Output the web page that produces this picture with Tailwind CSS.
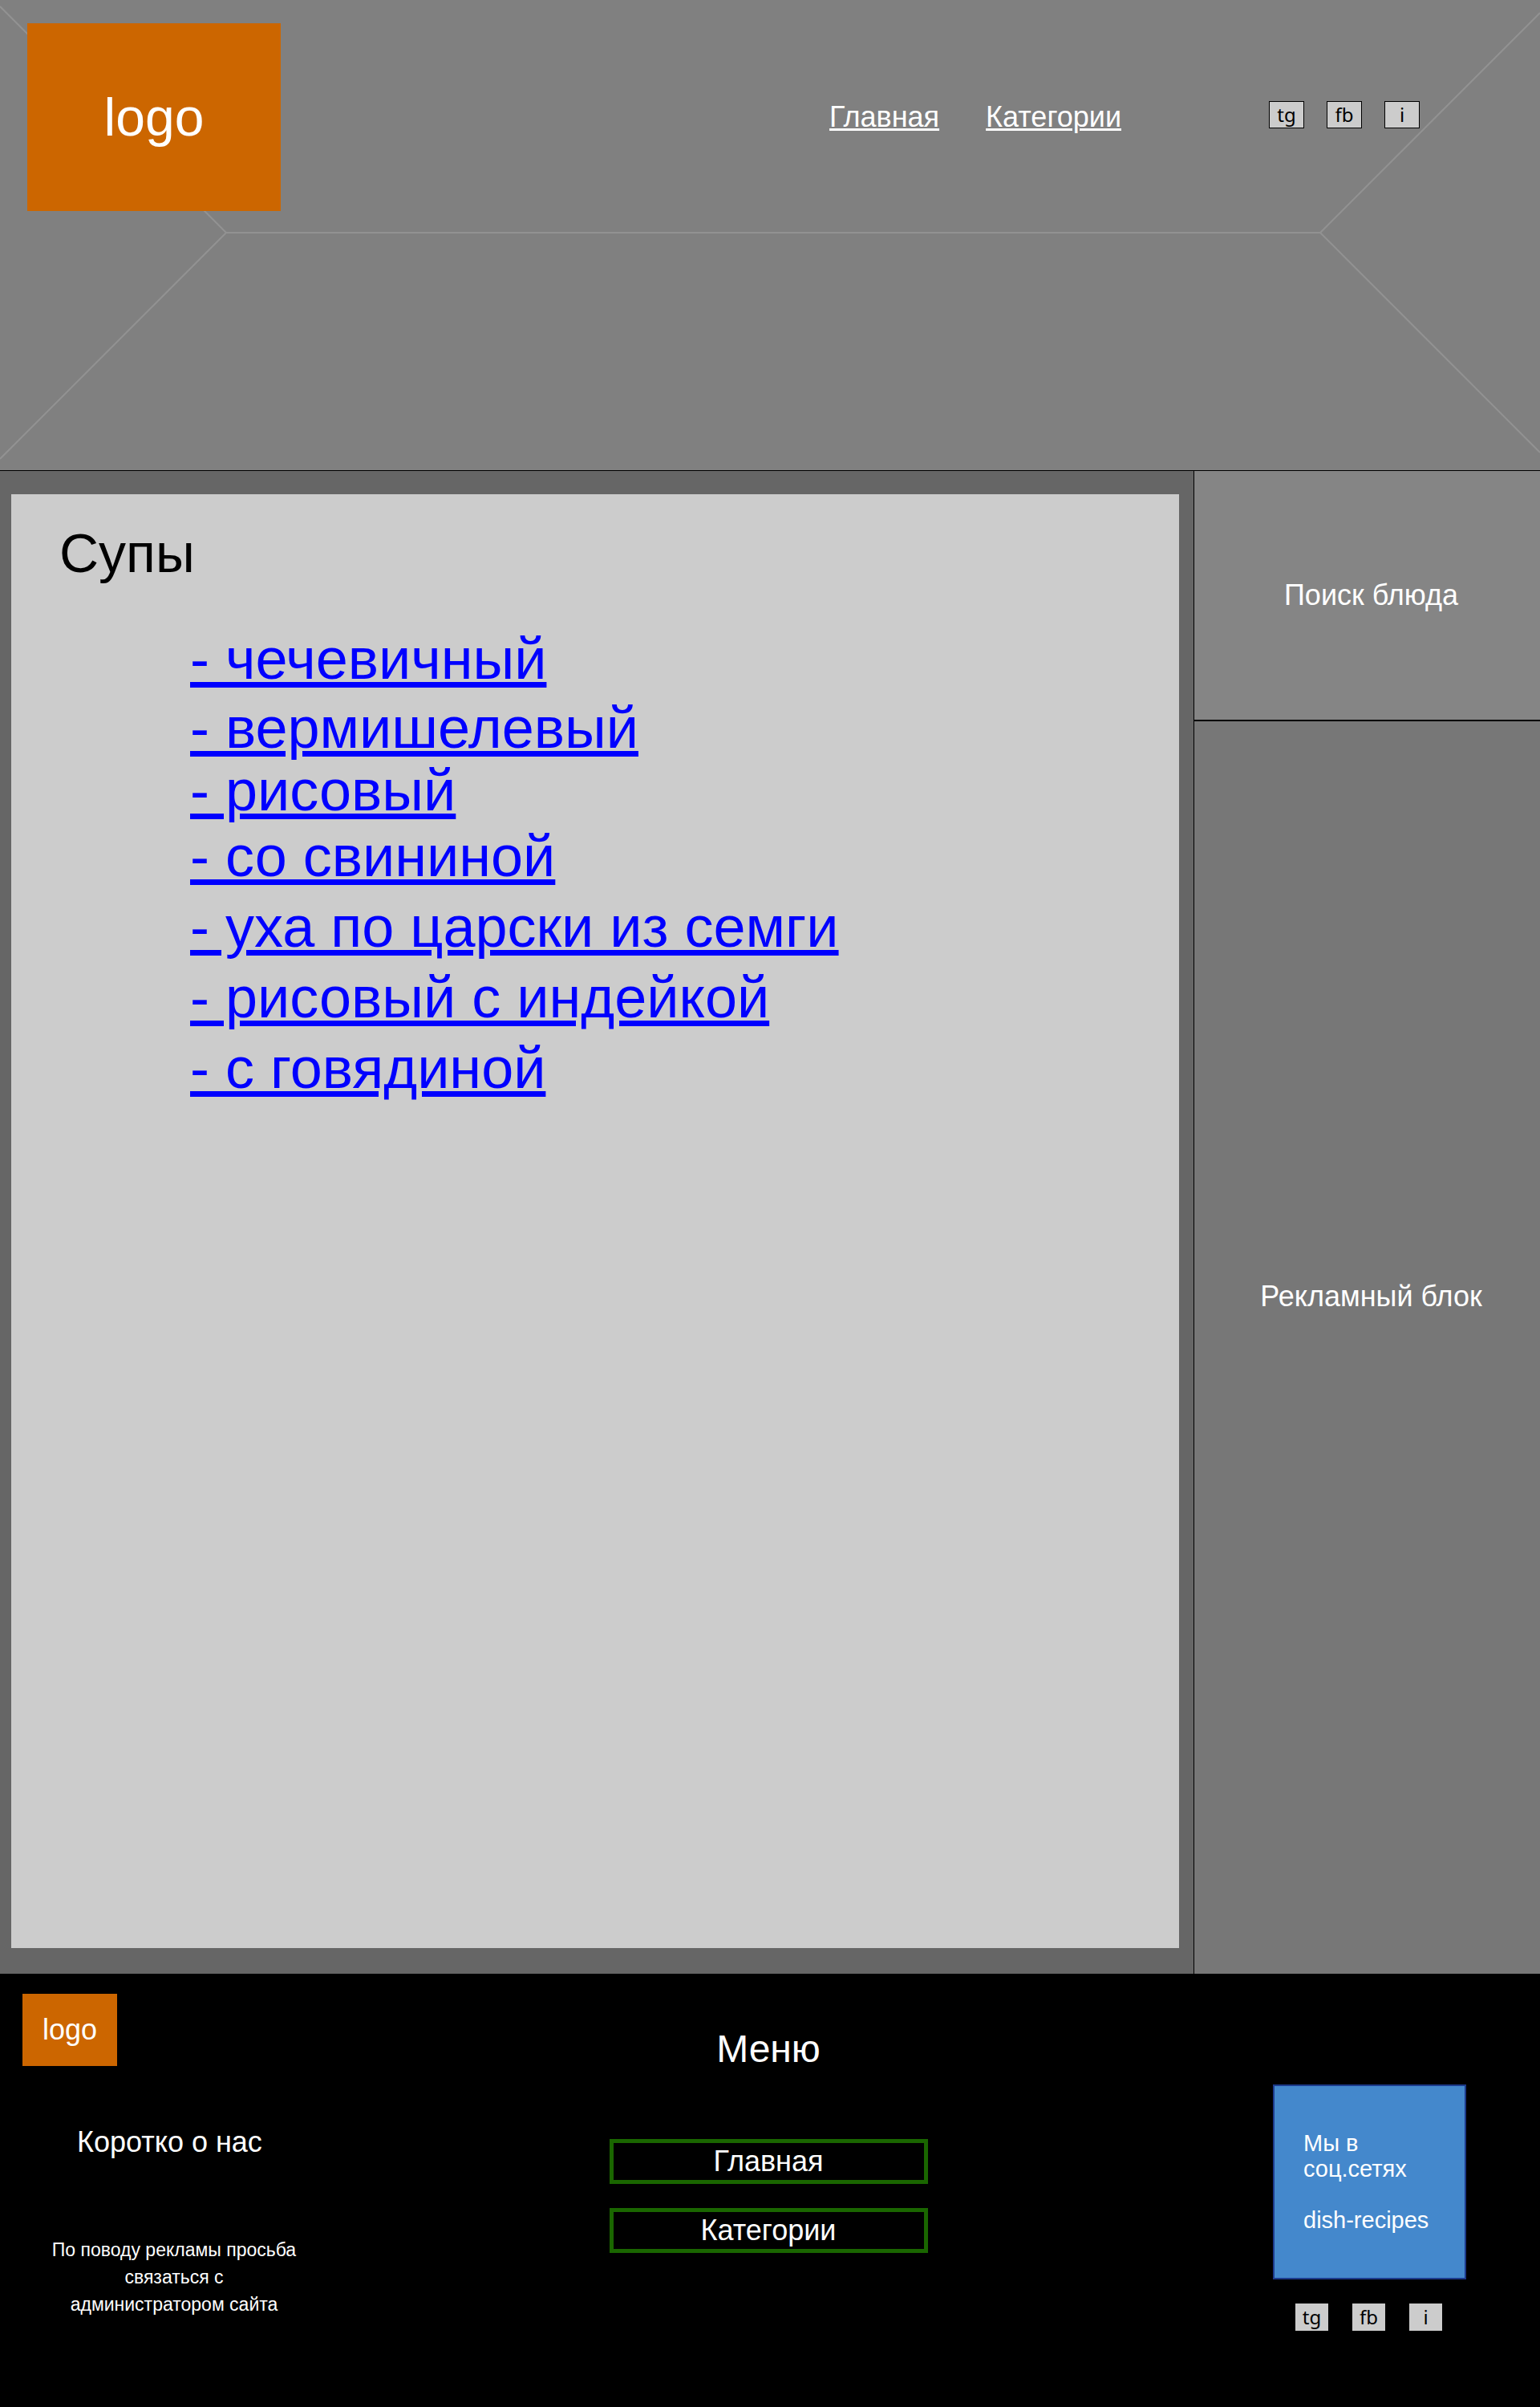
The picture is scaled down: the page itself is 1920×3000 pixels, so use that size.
<!DOCTYPE html>
<html lang="ru">
<head>
<meta charset="utf-8">
<meta name="viewport" content="width=device-width, initial-scale=1">
<title>Супы — рецепты блюд</title>
<script src="https://cdn.jsdelivr.net/npm/@tailwindcss/browser@4"></script>
</head>
<body class="bg-black font-['Liberation_Sans',Arial,sans-serif] text-4xl text-white">

<header class="relative flex min-h-[586px] items-start bg-[#808080]">
  <svg class="absolute inset-0 h-full w-full" viewBox="0 0 1920 586" preserveAspectRatio="none" fill="none" stroke="#929292" aria-hidden="true">
    <path d="M0 8 L282 290 L0 572 M1920 16 L1646 290 L1920 564" stroke-width="2"/>
    <path d="M282 290 H1646" stroke-width="2"/>
  </svg>
  <div class="relative flex w-full items-center pt-[29px] pr-[150px] pl-[34px]">
    <a href="#" class="flex h-[234px] w-[316px] items-center justify-center bg-[#cc6600] text-[66px] leading-none">logo</a>
    <nav class="ml-auto flex gap-[58px]">
      <a href="#" class="underline decoration-[3px] underline-offset-2">Главная</a>
      <a href="#" class="underline decoration-[3px] underline-offset-2">Категории</a>
    </nav>
    <div class="ml-[184px] flex gap-7 pb-1.5 font-['Noto_Sans',sans-serif] text-2xl leading-8 text-black">
      <a href="#" class="h-[34px] w-11 border border-black bg-[#cccccc] text-center">tg</a>
      <a href="#" class="h-[34px] w-11 border border-black bg-[#cccccc] text-center">fb</a>
      <a href="#" class="h-[34px] w-11 border border-black bg-[#cccccc] text-center">i</a>
    </div>
  </div>
</header>

<div class="flex">
  <main class="flex flex-1 flex-col border-t border-r border-black bg-[#666666] pt-[29px] pr-[18px] pb-8 pl-3.5">
    <section class="min-h-[1812px] flex-1 bg-[#cccccc] pt-[35px] pl-[60px] text-black">
      <h1 class="text-[68px] leading-[76px]">Супы</h1>
      <ul class="mt-[55px] pl-[163px] text-7xl leading-[78px] text-[#0000ff]">
        <li><a href="#" class="underline decoration-[7px] underline-offset-4">- чечевичный</a></li>
        <li class="mt-2"><a href="#" class="underline decoration-[7px] underline-offset-4">- вермишелевый</a></li>
        <li><a href="#" class="underline decoration-[7px] underline-offset-4">- рисовый</a></li>
        <li class="mt-1"><a href="#" class="underline decoration-[7px] underline-offset-4">- со свининой</a></li>
        <li class="mt-2.5"><a href="#" class="underline decoration-[7px] underline-offset-4">- уха по царски из семги</a></li>
        <li class="mt-2.5"><a href="#" class="underline decoration-[7px] underline-offset-4">- рисовый с индейкой</a></li>
        <li class="mt-2.5"><a href="#" class="underline decoration-[7px] underline-offset-4">- с говядиной</a></li>
      </ul>
    </section>
  </main>
  <aside class="flex w-[431px] flex-col border-t border-black">
    <section class="flex h-[312px] items-center justify-center border-b-2 border-black bg-[#858585] pl-2.5">
      <h2>Поиск блюда</h2>
    </section>
    <section class="flex flex-1 items-center justify-center bg-[#777777] pb-32 pl-2.5">
      <h2>Рекламный блок</h2>
    </section>
  </aside>
</div>

<footer class="grid min-h-[540px] grid-cols-[1fr_397px_1fr] items-start pr-1">
  <div class="pt-[25px]">
    <a href="#" class="ml-7 flex h-[90px] w-[118px] items-center justify-center bg-[#cc6600]">logo</a>
    <h2 class="mt-[75px] ml-24">Коротко о нас</h2>
    <p class="mt-[97px] ml-[62px] w-[310px] text-center text-[23px] leading-[34px]">По поводу рекламы просьба связаться с администратором сайта</p>
  </div>
  <nav class="flex flex-col pt-[66px] text-center">
    <h2 class="text-5xl leading-[56px]">Меню</h2>
    <a href="#" class="mt-[84px] h-14 border-[5px] border-[#1a6600] leading-[46px]">Главная</a>
    <a href="#" class="mt-[30px] h-14 border-[5px] border-[#1a6600] leading-[46px]">Категории</a>
  </nav>
  <div class="flex justify-end pt-[138px] pr-[88px]">
    <div class="w-[241px]">
      <div class="h-[243px] border-2 border-[#1c3a8c] bg-[#4488cc] pt-[55px] pl-9 text-[29px] leading-8">
        <p>Мы в<br>соц.сетях</p>
        <p class="mt-8">dish-recipes</p>
      </div>
      <div class="mt-[30px] flex gap-[30px] pl-7 font-['Noto_Sans',sans-serif] text-2xl leading-[34px] text-black">
        <a href="#" class="h-[34px] w-[41px] bg-[#cccccc] text-center">tg</a>
        <a href="#" class="h-[34px] w-[41px] bg-[#cccccc] text-center">fb</a>
        <a href="#" class="h-[34px] w-[41px] bg-[#cccccc] text-center">i</a>
      </div>
    </div>
  </div>
</footer>

</body>
</html>
